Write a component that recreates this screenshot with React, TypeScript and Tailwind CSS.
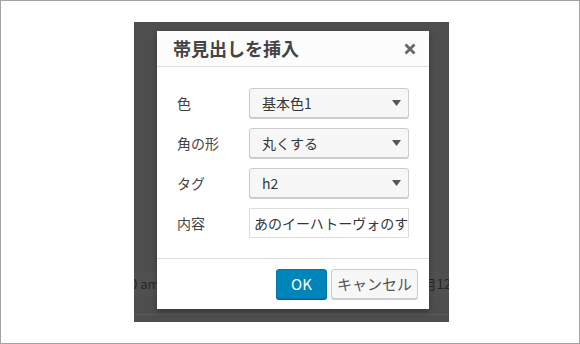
const font = {
  fontFamily: '"Noto Sans CJK JP", "Open Sans", sans-serif',
};

function Caret() {
  return (
    <svg width="9" height="6" viewBox="0 0 9 6" className="shrink-0">
      <path d="M0 0h9L4.5 6z" fill="#555" />
    </svg>
  );
}

function SelectBox({ value }: { value: string }) {
  return (
    <div className="flex h-[30px] w-[160px] items-center justify-between rounded-[3px] border border-[#cccccc] bg-[#f7f7f7] pl-[12px] pr-[7px] text-[14px] text-[#32373c] shadow-[0_1px_0_#cccccc]">
      <span className="leading-none">{value}</span>
      <Caret />
    </div>
  );
}

const rows = [
  { label: "色", value: "基本色1" },
  { label: "角の形", value: "丸くする" },
  { label: "タグ", value: "h2" },
];

export default function App() {
  return (
    <div
      className="h-[344px] w-[580px] overflow-hidden border border-[#a3a3a3] bg-white"
      style={font}
    >
      <div className="relative ml-[133px] mt-[21px] h-[300px] w-[315px] overflow-hidden bg-[#4e4e4e]">
        {/* background content under the modal */}
        <div className="absolute left-0 top-[250px] flex h-[24px] w-full items-center justify-between bg-[#505050] text-[13px] text-[#262626]">
          <span className="-ml-[4px]">0 am</span>
          <span className="-mr-[2px]">月12</span>
        </div>
        <div className="absolute left-0 top-[292px] h-px w-full bg-[#5a5a5a]" />

        {/* modal */}
        <div className="absolute left-[23px] top-[9px] w-[272px] bg-white shadow-[0_3px_6px_rgba(0,0,0,0.3)]">
          <div className="flex h-[36px] items-center justify-between border-b border-[#dddddd] bg-[#fcfcfc] pl-[16px] pr-[13px]">
            <h1 className="text-[18px] font-bold text-[#444444]">
              帯見出しを挿入
            </h1>
            <svg width="12" height="12" viewBox="0 0 12 12">
              <path
                d="M1.5 1.5l9 9M10.5 1.5l-9 9"
                stroke="#666"
                strokeWidth="2.8"
              />
            </svg>
          </div>

          <div className="flex flex-col gap-[10px] px-[20px] pb-[20px] pt-[21px]">
            {rows.map((r) => (
              <div key={r.label} className="flex items-center">
                <span className="w-[72px] text-[14px] text-[#444444]">
                  {r.label}
                </span>
                <SelectBox value={r.value} />
              </div>
            ))}
            <div className="flex items-center">
              <span className="w-[72px] text-[14px] text-[#444444]">内容</span>
              <input
                readOnly
                value="あのイーハトーヴォのすきとおった風"
                className="h-[30px] w-[160px] border border-[#dddddd] bg-white pl-[4px] text-[14px] text-[#32373c] outline-none"
                style={font}
              />
            </div>
          </div>

          <div className="flex justify-end gap-[4px] border-t border-[#dddddd] pb-[10px] pr-[11px] pt-[10px]">
            <button className="h-[30px] w-[51px] rounded-[3px] border border-[#0073aa] bg-[#0085ba] text-[15px] text-white shadow-[0_1px_0_#006799]">
              OK
            </button>
            <button className="h-[30px] w-[87px] rounded-[3px] border border-[#cccccc] bg-[#f7f7f7] text-[15px] text-[#555555] shadow-[0_1px_0_#cccccc]">
              キャンセル
            </button>
          </div>
        </div>
      </div>
    </div>
  );
}
